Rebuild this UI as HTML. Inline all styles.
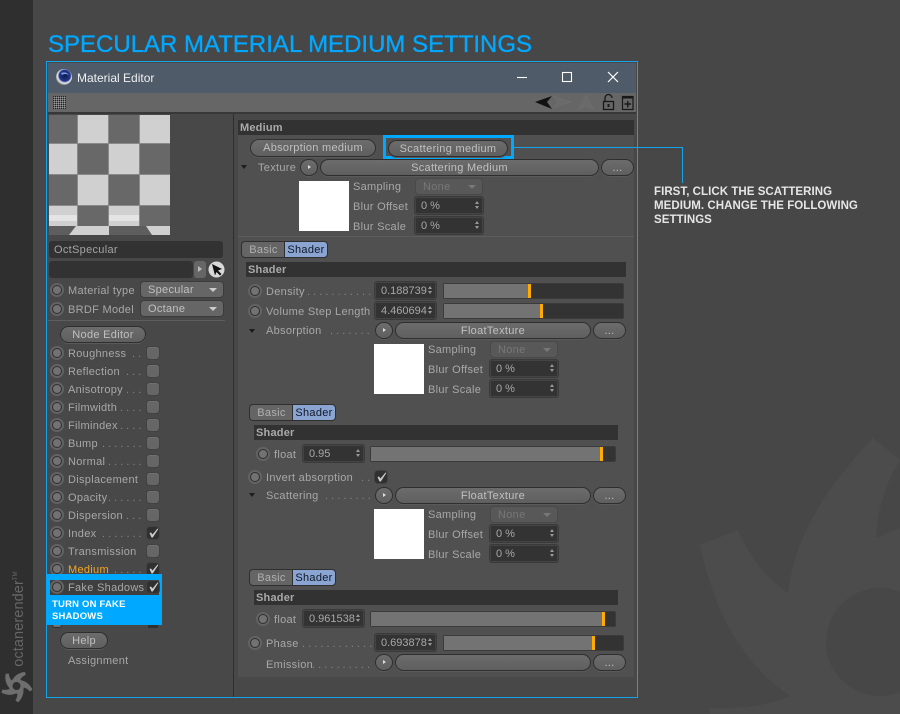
<!DOCTYPE html>
<html><head><meta charset="utf-8">
<style>
html,body{margin:0;padding:0;background:#474747}
#p{position:relative;width:900px;height:714px;overflow:hidden;background:#474747;font-family:"Liberation Sans",sans-serif;font-size:11px;color:#a8a8a8;letter-spacing:.3px}
#p div,#p svg{position:absolute;box-sizing:border-box}
.t{height:14px;line-height:14px;white-space:nowrap;margin-top:1px}
.d{height:14px;line-height:14px;letter-spacing:0;white-space:pre;color:#858585;margin-top:1px}
.r{width:10px;height:10px;border-radius:50%;background:#727272;border:1px solid #2e2e2e;box-shadow:0 0 0 2px #636363}
.c{width:12px;height:12px;border-radius:3px;background:#666;box-shadow:inset 0 1px 0 #707070,0 0 0 1px #424242}
.k{background:#303030;box-shadow:0 0 0 1px #424242}
.b{border-radius:9px;background:linear-gradient(#6c6c6c,#5f5f5f);border:1px solid #2f2f2f;color:#c0c0c0;text-align:center;line-height:17px;white-space:nowrap;box-shadow:0 1px 0 #5a5a5a}
.dd{border-radius:4px;background:#666;border:1px solid #3b3b3b;color:#c0c0c0;padding-left:7px;line-height:16px;height:17px}
.dd.x{background:#585858;color:#777;border-color:#494949}
.dd::after{content:"";position:absolute;right:6px;top:6px;border:4px solid transparent;border-top:4px solid #ccc;border-bottom:0}
.dd.x::after{border-top-color:#777}
.n{background:#333;border:1px solid #444;box-shadow:0 0 0 1px #3a3a3a;border-radius:2px;color:#a8a8a8;padding-left:5px;line-height:17px;height:17px;white-space:nowrap;letter-spacing:0}
.n::before{content:"";position:absolute;right:3px;top:3px;border:2.5px solid transparent;border-bottom:3.5px solid #999;border-top:0}
.n::after{content:"";position:absolute;right:3px;top:8px;border:2.5px solid transparent;border-top:3.5px solid #999;border-bottom:0}
.s{background:#333;border:1px solid #3b3b3b;border-radius:2px;height:16px}
.f{background:#737373;top:0;left:0;height:14px}
.m{background:#ffab00;top:0;width:2.5px;height:14px}
.h{background:#323232;height:15px;color:#aaa;font-weight:bold;padding-left:2px;line-height:17px;letter-spacing:.2px}
.tabA{background:#656565;border:1px solid #2f2f2f;border-right:0;border-radius:4px 0 0 4px;color:#b0b0b0;text-align:center;line-height:17px;height:17px;width:44px}
.tabB{background:#8aa5d2;border:1px solid #2f2f2f;border-radius:0 4px 4px 0;color:#101828;text-align:center;line-height:17px;height:17px;width:44px}
.w{background:#fff;width:50px;height:50px}
.a{width:0;height:0;border-left:3.5px solid transparent;border-right:3.5px solid transparent;border-top:4px solid #1c1c1c}
.ar::after{content:"";position:absolute;left:7px;top:5px;border-left:3.5px solid #ddd;border-top:2.5px solid transparent;border-bottom:2.5px solid transparent}
</style></head><body><div id="p">

<svg style="left:0;top:0" width="900" height="714" viewBox="0 0 900 714">
<path fill="#4c4c4c" d="M700 545 L738 530 Q756 572 788 593 Q795 520 873 438 L900 460 Q878 495 876 538 L900 528 V714 H710 V708 Q760 710 790 696 Q722 650 700 545 Z"/>
<circle cx="880" cy="642" r="54" fill="#474747"/>
</svg>

<div style="left:0;top:0;width:33px;height:714px;background:#2f2f2f"></div>
<div style="left:16px;top:619px;width:0;height:0"><div style="left:-50px;top:-10px;width:100px;height:20px;line-height:20px;text-align:center;transform:rotate(-90deg);color:#666;font-size:14.500px;letter-spacing:.1px;white-space:nowrap">octanerender<span style="font-size:6px;vertical-align:6px">TM</span></div></div>
<svg style="left:0;top:669px" width="33" height="34" viewBox="-16.500 -17 33 34"><g fill="#6e6e6e" transform="rotate(20)">
<path d="M-14.500 -7.800 L-11.400 -9 Q-10 -5.600 -6.800 -3.600 L-6.600 4 Q-12.800 .6 -14.500 -7.800Z"/>
<path d="M-14.500 -7.800 L-11.400 -9 Q-10 -5.600 -6.800 -3.600 L-6.600 4 Q-12.800 .6 -14.500 -7.800Z" transform="rotate(72)"/>
<path d="M-14.500 -7.800 L-11.400 -9 Q-10 -5.600 -6.800 -3.600 L-6.600 4 Q-12.800 .6 -14.500 -7.800Z" transform="rotate(144)"/>
<path d="M-14.500 -7.800 L-11.400 -9 Q-10 -5.600 -6.800 -3.600 L-6.600 4 Q-12.800 .6 -14.500 -7.800Z" transform="rotate(216)"/>
<path d="M-14.500 -7.800 L-11.400 -9 Q-10 -5.600 -6.800 -3.600 L-6.600 4 Q-12.800 .6 -14.500 -7.800Z" transform="rotate(288)"/>
<circle r="7.600"/></g><circle r="4" fill="#2f2f2f"/></svg>

<div style="left:48px;top:30px;height:30px;line-height:30px;font-size:24px;color:#00a8ff;letter-spacing:0;white-space:nowrap;-webkit-text-stroke:.35px #00a8ff">SPECULAR MATERIAL MEDIUM SETTINGS</div>

<!-- window -->
<div style="left:46px;top:61px;width:592px;height:637px;background:#484848;border:1.5px solid #14a3ea"></div>
<div style="left:48px;top:63px;width:588px;height:30px;background:#4f5b69"></div>
<div style="left:48px;top:93px;width:588px;height:19px;background:#666"></div>
<div style="left:48px;top:112px;width:588px;height:2px;background:#383838"></div>
<svg style="left:55px;top:68px" width="18" height="18" viewBox="0 0 18 18"><defs><radialGradient id="g" cx=".55" cy=".42" r=".58"><stop offset="0" stop-color="#0d1a50"/><stop offset=".6" stop-color="#24388c"/><stop offset=".78" stop-color="#e8ebf2"/><stop offset="1" stop-color="#8a8a8a"/></radialGradient></defs><circle cx="9" cy="9" r="8" fill="url(#g)"/><path d="M6 5 Q11 3 14 7 Q10 5 7 7Z" fill="#7a9ae0"/></svg>
<div class="t" style="left:77px;top:70px;font-size:12px;color:#f0f0f0;letter-spacing:0">Material Editor</div>
<svg style="left:510px;top:66px" width="115" height="22" viewBox="510 66 115 22" fill="none" stroke="#fff" stroke-width="1.100"><path d="M517 77.500H527"/><rect x="562.500" y="72.500" width="9" height="9"/><path d="M608 72L618 82M618 72L608 82" stroke-width="1.200"/></svg>

<svg style="left:53px;top:96px" width="13" height="13"><defs><pattern id="dz" width="2" height="2" patternUnits="userSpaceOnUse"><rect width="1" height="1" fill="#222"/><rect x="1" y="1" width="1" height="1" fill="#999"/></pattern></defs><rect width="13" height="13" fill="url(#dz)"/></svg>
<svg style="left:530px;top:92px" width="108" height="20" viewBox="530 92 108 20">
<path d="M535 102L552 96L547 102L552 109Z" fill="#111"/>
<path d="M571 102L553 96L558 102L553 108Z" fill="#6a6a6a" stroke="#717171" stroke-width=".5"/>
<path d="M586 95L578 110L586 106L594 110Z" fill="#6a6a6a" stroke="#717171" stroke-width=".5"/>
<path d="M605 101V98a3.500 3.500 0 0 1 7 0" fill="none" stroke="#181818" stroke-width="1.300"/><rect x="603.500" y="101.500" width="10" height="8" fill="none" stroke="#181818" stroke-width="1.300"/><rect x="607.500" y="104" width="2" height="3" fill="#181818"/>
<rect x="622.500" y="96.500" width="10.500" height="13" fill="none" stroke="#181818" stroke-width="1.200"/><rect x="622" y="96" width="11.500" height="2.500" fill="#181818"/><path d="M624.500 104H631M627.800 101V107.500" stroke="#181818" stroke-width="1.400"/>
</svg>

<!-- preview -->
<svg style="left:49px;top:115px" width="121" height="120" viewBox="0 0 121 120">
<rect width="121" height="120" fill="#8a8a8a"/>
<g fill="#686868"><rect width="28" height="28"/><rect x="60" width="30" height="28"/><rect x="29" y="29" width="30" height="30"/><rect x="91" y="29" width="30" height="30"/><rect y="60" width="28" height="30"/><rect x="60" y="60" width="30" height="30"/><rect x="29" y="91" width="30" height="20"/><rect x="91" y="91" width="30" height="20"/></g>
<g fill="#d0d0d0"><rect x="29" width="30" height="28"/><rect x="91" width="30" height="28"/><rect y="29" width="28" height="30"/><rect x="60" y="29" width="30" height="30"/><rect x="29" y="60" width="30" height="30"/><rect x="91" y="60" width="30" height="30"/><rect y="91" width="28" height="20"/><rect x="60" y="91" width="30" height="20"/></g>
<rect y="100" width="28" height="6" fill="#e4e4e4"/><rect x="60" y="100" width="30" height="6" fill="#e4e4e4"/>
<rect y="111" width="121" height="9" fill="#5e5e5e"/>
<path d="M27 111H60V120H20Z M97 111H121V120H103Z" fill="#d0d0d0"/>
</svg>
<div style="left:49px;top:241px;width:174px;height:17px;background:#323232;border-radius:3px"></div>
<div class="t" style="left:54px;top:242px;color:#a4a4a4">OctSpecular</div>
<div style="left:49px;top:261px;width:144px;height:17px;background:#323232;border-radius:3px"></div>
<div style="left:194px;top:261px;width:12px;height:17px;background:#666;border-radius:3px"><div style="left:4px;top:5px;border-left:4px solid #bbb;border-top:3px solid transparent;border-bottom:3px solid transparent"></div></div>
<svg style="left:208px;top:261px" width="17" height="17" viewBox="0 0 17 17"><circle cx="8.500" cy="8.500" r="8" fill="#d8d8d8"/><path d="M4 3L14 8L10 9.500L13.500 13L12 14.500L8.500 11L7 14.500Z" fill="#111"/></svg>

<div class="r" style="left:52px;top:285px"></div><div class="t" style="left:68px;top:283px">Material type</div>
<div class="dd" style="left:140px;top:281px;width:84px">Specular</div>
<div class="r" style="left:52px;top:304px"></div><div class="t" style="left:68px;top:302px">BRDF Model</div>
<div class="dd" style="left:140px;top:300px;width:84px">Octane</div>
<div style="left:48px;top:320px;width:177px;height:1px;background:#5e5e5e"></div>
<div class="b" style="left:60px;top:326px;width:86px;height:17px">Node Editor</div>

<div class="r" style="left:52px;top:348px"></div><div class="t" style="left:68px;top:346px">Roughness</div><div class="d" style="left:132px;top:346px">. .</div><div class="c" style="left:147px;top:347px"></div>
<div class="r" style="left:52px;top:366px"></div><div class="t" style="left:68px;top:364px">Reflection</div><div class="d" style="left:126px;top:364px">. . .</div><div class="c" style="left:147px;top:365px"></div>
<div class="r" style="left:52px;top:384px"></div><div class="t" style="left:68px;top:382px">Anisotropy</div><div class="d" style="left:126px;top:382px">. . .</div><div class="c" style="left:147px;top:383px"></div>
<div class="r" style="left:52px;top:402px"></div><div class="t" style="left:68px;top:400px">Filmwidth</div><div class="d" style="left:120px;top:400px">. . . .</div><div class="c" style="left:147px;top:401px"></div>
<div class="r" style="left:52px;top:420px"></div><div class="t" style="left:68px;top:418px">Filmindex</div><div class="d" style="left:120px;top:418px">. . . .</div><div class="c" style="left:147px;top:419px"></div>
<div class="r" style="left:52px;top:438px"></div><div class="t" style="left:68px;top:436px">Bump</div><div class="d" style="left:102px;top:436px">. . . . . . .</div><div class="c" style="left:147px;top:437px"></div>
<div class="r" style="left:52px;top:456px"></div><div class="t" style="left:68px;top:454px">Normal</div><div class="d" style="left:108px;top:454px">. . . . . .</div><div class="c" style="left:147px;top:455px"></div>
<div class="r" style="left:52px;top:474px"></div><div class="t" style="left:68px;top:472px">Displacement</div><div class="c" style="left:147px;top:473px"></div>
<div class="r" style="left:52px;top:492px"></div><div class="t" style="left:68px;top:490px">Opacity</div><div class="d" style="left:108px;top:490px">. . . . . .</div><div class="c" style="left:147px;top:491px"></div>
<div class="r" style="left:52px;top:510px"></div><div class="t" style="left:68px;top:508px">Dispersion</div><div class="d" style="left:126px;top:508px">. . .</div><div class="c" style="left:147px;top:509px"></div>
<div class="r" style="left:52px;top:528px"></div><div class="t" style="left:68px;top:526px">Index</div><div class="d" style="left:102px;top:526px">. . . . . . .</div><div class="c k" style="left:147px;top:527px"><svg style="left:1px;top:1px" width="11" height="10"><path d="M1.500 5L3 4.500L4.500 6.500L9.500 .5L10.300 1L4.800 9.500L3.500 9.500Z" fill="#ccc"/></svg></div>
<div class="r" style="left:52px;top:546px"></div><div class="t" style="left:68px;top:544px">Transmission</div><div class="c" style="left:147px;top:545px"></div>
<div class="r" style="left:52px;top:564px"></div><div class="t" style="left:68px;top:562px;color:#f5a623">Medium</div><div class="d" style="left:114px;top:562px">. . . . .</div><div class="c k" style="left:147px;top:563px"><svg style="left:1px;top:1px" width="11" height="10"><path d="M1.500 5L3 4.500L4.500 6.500L9.500 .5L10.300 1L4.800 9.500L3.500 9.500Z" fill="#ccc"/></svg></div>

<!-- highlight -->
<div style="left:46px;top:574px;width:116px;height:51px;background:#00a8ff"></div>
<div style="left:50px;top:580px;width:109px;height:15px;background:#3f3f3f"></div>
<div class="r" style="left:52px;top:582px"></div><div class="t" style="left:68px;top:580px">Fake Shadows</div><div class="c k" style="left:147px;top:581px"><svg style="left:1px;top:1px" width="11" height="10"><path d="M1.500 5L3 4.500L4.500 6.500L9.500 .5L10.300 1L4.800 9.500L3.500 9.500Z" fill="#ccc"/></svg></div>
<div style="left:52px;top:599px;width:108px;font-size:9.500px;line-height:12px;font-weight:bold;color:#fff;letter-spacing:.2px">TURN ON FAKE SHADOWS</div>
<div class="r" style="left:52px;top:625px;height:3px;width:10px;border-radius:0 0 5px 5px;border-top:0;box-shadow:none"></div>
<div style="left:148px;top:625px;width:10px;height:3px;background:#303030"></div>

<div class="b" style="left:60px;top:632px;width:48px;height:17px">Help</div>
<div class="t" style="left:68px;top:653px">Assignment</div>

<!-- panel divider -->
<div style="left:233px;top:114px;width:1px;height:583px;background:#2f2f2f"></div>
<div style="left:238px;top:120px;width:396px;height:557px;background:#505050"></div>
<div style="left:238px;top:236px;width:396px;height:1px;background:#5c5c5c"></div>

<div class="h" style="left:238px;top:120px;width:396px">Medium</div>
<div class="b" style="left:250px;top:139px;width:126px;height:18px">Absorption medium</div>
<div style="left:383px;top:135px;width:131px;height:24px;border:3px solid #00a8ff"></div>
<div class="b" style="left:388px;top:140px;width:120px;height:17px">Scattering medium</div>
<div style="left:514px;top:147px;width:169px;height:1px;background:#14a3ea"></div>
<div style="left:682px;top:147px;width:1px;height:36px;background:#14a3ea"></div>
<div style="left:654px;top:185px;width:230px;font-size:11.500px;line-height:14px;font-weight:bold;color:#e6e6e6;letter-spacing:.05px">FIRST, CLICK THE SCATTERING<br>MEDIUM. CHANGE THE FOLLOWING<br>SETTINGS</div>

<div class="a" style="left:241px;top:165px"></div><div class="t" style="left:258px;top:160px">Texture</div>
<div class="b ar" style="left:300px;top:159px;width:18px;height:17px"></div>
<div class="b" style="left:320px;top:159px;width:279px;height:17px">Scattering Medium</div>
<div class="b" style="left:601px;top:159px;width:33px;height:17px">...</div>
<div class="w" style="left:299px;top:181px"></div>
<div class="t" style="left:353px;top:179px">Sampling</div><div class="dd x" style="left:415px;top:178px;width:68px">None</div>
<div class="t" style="left:353px;top:199px">Blur Offset</div><div class="n" style="left:415px;top:197px;width:68px">0 %</div>
<div class="t" style="left:353px;top:219px">Blur Scale</div><div class="n" style="left:415px;top:217px;width:68px">0 %</div>

<div class="tabA" style="left:241px;top:241px">Basic</div><div class="tabB" style="left:284px;top:241px">Shader</div>
<div class="h" style="left:246px;top:262px;width:380px">Shader</div>

<div class="r" style="left:250px;top:286px"></div><div class="t" style="left:266px;top:284px">Density</div><div class="d" style="left:307px;top:284px">. . . . . . . . . . .</div>
<div class="n" style="left:375px;top:282px;width:61px">0.188739</div>
<div class="s" style="left:443px;top:283px;width:181px"><div class="f" style="width:84px"></div><div class="m" style="left:84px"></div></div>

<div class="r" style="left:250px;top:306px"></div><div class="t" style="left:266px;top:304px">Volume Step Length</div>
<div class="n" style="left:375px;top:302px;width:61px">4.460694</div>
<div class="s" style="left:443px;top:303px;width:181px"><div class="f" style="width:96px"></div><div class="m" style="left:96px"></div></div>

<div class="a" style="left:249px;top:329px"></div><div class="t" style="left:266px;top:323px">Absorption</div><div class="d" style="left:330px;top:323px">. . . . . . .</div>
<div class="b ar" style="left:375px;top:322px;width:18px;height:17px"></div>
<div class="b" style="left:395px;top:322px;width:196px;height:17px">FloatTexture</div>
<div class="b" style="left:593px;top:322px;width:33px;height:17px">...</div>
<div class="w" style="left:374px;top:344px"></div>
<div class="t" style="left:428px;top:342px">Sampling</div><div class="dd x" style="left:490px;top:341px;width:68px">None</div>
<div class="t" style="left:428px;top:362px">Blur Offset</div><div class="n" style="left:490px;top:360px;width:68px">0 %</div>
<div class="t" style="left:428px;top:382px">Blur Scale</div><div class="n" style="left:490px;top:380px;width:68px">0 %</div>

<div class="tabA" style="left:249px;top:404px">Basic</div><div class="tabB" style="left:292px;top:404px">Shader</div>
<div class="h" style="left:254px;top:425px;width:364px">Shader</div>
<div class="r" style="left:258px;top:449px"></div><div class="t" style="left:274px;top:447px">float</div>
<div class="n" style="left:303px;top:445px;width:61px">0.95</div>
<div class="s" style="left:370px;top:446px;width:246px"><div class="f" style="width:229px"></div><div class="m" style="left:229px"></div></div>

<div class="r" style="left:250px;top:472px"></div><div class="t" style="left:266px;top:470px">Invert absorption</div><div class="d" style="left:361px;top:470px">. .</div>
<div class="c k" style="left:375px;top:471px"><svg style="left:1px;top:1px" width="11" height="10"><path d="M1.500 5L3 4.500L4.500 6.500L9.500 .5L10.300 1L4.800 9.500L3.500 9.500Z" fill="#ccc"/></svg></div>

<div class="a" style="left:249px;top:493px"></div><div class="t" style="left:266px;top:488px">Scattering</div><div class="d" style="left:325px;top:488px">. . . . . . . .</div>
<div class="b ar" style="left:375px;top:487px;width:18px;height:17px"></div>
<div class="b" style="left:395px;top:487px;width:196px;height:17px">FloatTexture</div>
<div class="b" style="left:593px;top:487px;width:33px;height:17px">...</div>
<div class="w" style="left:374px;top:509px"></div>
<div class="t" style="left:428px;top:507px">Sampling</div><div class="dd x" style="left:490px;top:506px;width:68px">None</div>
<div class="t" style="left:428px;top:527px">Blur Offset</div><div class="n" style="left:490px;top:525px;width:68px">0 %</div>
<div class="t" style="left:428px;top:547px">Blur Scale</div><div class="n" style="left:490px;top:545px;width:68px">0 %</div>

<div class="tabA" style="left:249px;top:569px">Basic</div><div class="tabB" style="left:292px;top:569px">Shader</div>
<div class="h" style="left:254px;top:590px;width:364px">Shader</div>
<div class="r" style="left:258px;top:614px"></div><div class="t" style="left:274px;top:612px">float</div>
<div class="n" style="left:303px;top:610px;width:61px">0.961538</div>
<div class="s" style="left:370px;top:611px;width:246px"><div class="f" style="width:231px"></div><div class="m" style="left:231px"></div></div>

<div class="r" style="left:250px;top:638px"></div><div class="t" style="left:266px;top:636px">Phase</div><div class="d" style="left:302px;top:636px">. . . . . . . . . . . .</div>
<div class="n" style="left:375px;top:634px;width:61px">0.693878</div>
<div class="s" style="left:443px;top:635px;width:181px"><div class="f" style="width:148px"></div><div class="m" style="left:148px"></div></div>

<div class="t" style="left:266px;top:657px">Emission</div><div class="d" style="left:312px;top:657px">. . . . . . . . . .</div>
<div class="b ar" style="left:375px;top:654px;width:18px;height:17px"></div>
<div class="b" style="left:395px;top:654px;width:196px;height:17px"></div>
<div class="b" style="left:593px;top:654px;width:33px;height:17px">...</div>

</div></body></html>
